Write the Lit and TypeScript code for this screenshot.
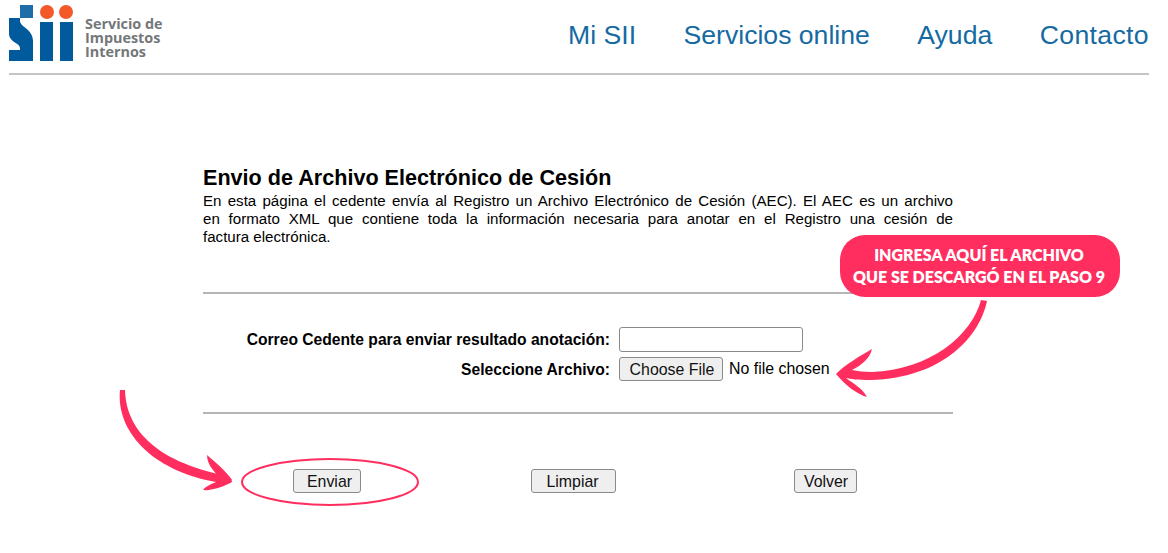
import { LitElement, html, css, svg } from "lit";
import { customElement } from "lit/decorators.js";

@customElement("app-root")
export class AppRoot extends LitElement {
  static styles = css`
    :host { display: block; position: relative; width: 1168px; height: 553px; overflow: hidden; background: #fff; font-family: "Liberation Sans", Arial, sans-serif; color: #000; }
    .header { display: flex; justify-content: space-between; align-items: flex-start; margin: 0 19px 0 9px; height: 73px; border-bottom: 2px solid #c4c4c4; }
    .brand { display: flex; gap: 12px; padding-top: 4px; }
    .brand svg { display: block; }
    .brand-text { font-family: "Open Sans", sans-serif; font-weight: 700; font-size: 14.4px; line-height: 14px; color: #74777a; padding-top: 13px; }
    .nav { display: flex; gap: 47.5px; padding-top: 20px; font-size: 26.6px; line-height: 30px; color: #156aa2; }
    .contact { letter-spacing: 0.35px; }
    .main { width: 750px; margin: 92px 0 0 203px; }
    h1 { margin: 0 0 3px; font-size: 21.6px; line-height: 22px; font-weight: bold; }
    p { margin: 0; font-size: 15.1px; line-height: 18px; height: 100px; }
    .line { display: block; white-space: nowrap; }
    .just { text-align: justify; text-align-last: justify; white-space: normal; }
    .rule { height: 0; border-top: 2px solid #b5b5b5; }
    .form { display: grid; grid-template-columns: 407px auto; column-gap: 9px; row-gap: 5px; padding: 33px 0 31px; align-items: center; justify-items: start; }
    .label { justify-self: end; font-size: 15.65px; font-weight: bold; white-space: nowrap; padding-top: 1px; }
    .field { width: 184px; height: 25px; box-sizing: border-box; border: 1px solid #8a8a8a; border-radius: 3px; background: #fff; }
    .file { display: flex; align-items: center; gap: 6px; font-size: 15.9px; white-space: nowrap; }
    .btn { box-sizing: border-box; height: 24px; padding: 1px 0 0; border: 1px solid #8a8a8a; border-radius: 3px; background: #efefef; font: 15.9px "Liberation Sans", Arial, sans-serif; color: #111; }
    .choose { width: 104px; padding-left: 2px; }
    .actions { display: flex; padding: 55px 0 0 90px; }
    .enviar { width: 68px; margin-right: 170px; padding-left: 5px; }
    .limpiar { width: 85px; margin-right: 178px; padding-right: 2px; }
    .volver { width: 63px; padding-left: 1px; }
    .overlay { position: absolute; left: 0; top: 0; pointer-events: none; }
    .callout { position: absolute; left: 840px; top: 235px; width: 280px; height: 62px; box-sizing: border-box; padding: 9px 2px 0 0; border-radius: 25px; background: #ff2e5f; color: #fff; text-align: center; font-family: "Lato", sans-serif; font-weight: 800; font-size: 16px; line-height: 22px; white-space: nowrap; }
  `;

  render() {
    return html`
      <header class="header">
        <div class="brand">
          <svg width="64" height="58" viewBox="9 4 64 58" aria-label="SII">
            <rect x="20" y="5" width="13" height="13" fill="#1f6da8"></rect>
            <path d="M9 18 H20 V21 C20 27 33 29 33 41 V61 H9 V50 H20 V48 C20 43 9 42 9 34 Z" fill="#005a9c"></path>
            <circle cx="47" cy="12" r="7" fill="#f4592a"></circle>
            <circle cx="66" cy="12" r="7" fill="#f4592a"></circle>
            <rect x="40" y="22" width="13" height="39" fill="#005a9c"></rect>
            <rect x="60" y="22" width="13" height="39" fill="#005a9c"></rect>
          </svg>
          <div class="brand-text">Servicio de<br />Impuestos<br />Internos</div>
        </div>
        <nav class="nav"><span>Mi SII</span><span>Servicios online</span><span>Ayuda</span><span class="contact">Contacto</span></nav>
      </header>
      <main class="main">
        <h1>Envio de Archivo Electrónico de Cesión</h1>
        <p>
          <span class="line just">En esta página el cedente envía al Registro un Archivo Electrónico de Cesión (AEC). El AEC es un archivo</span>
          <span class="line just">en formato XML que contiene toda la información necesaria para anotar en el Registro una cesión de</span>
          <span class="line">factura electrónica.</span>
        </p>
        <div class="rule"></div>
        <div class="form">
          <span class="label">Correo Cedente para enviar resultado anotación:</span>
          <input class="field" type="text" />
          <span class="label">Seleccione Archivo:</span>
          <span class="file"><button class="btn choose">Choose File</button>No file chosen</span>
        </div>
        <div class="rule"></div>
        <div class="actions">
          <button class="btn enviar">Enviar</button>
          <button class="btn limpiar">Limpiar</button>
          <button class="btn volver">Volver</button>
        </div>
      </main>
      <svg class="overlay" width="1168" height="553" viewBox="0 0 1168 553">
        ${svg`<ellipse cx="330" cy="482" rx="88" ry="23" fill="none" stroke="#ff2e5f" stroke-width="2"></ellipse>
        <path d="M981 300 L987 301 C980 335 945 378 870 380 C858 380 850 379 846 378 C854 384 862 388 867 397 C857 394 846 386 836 374 C846 364 860 356 872 349 C870 358 862 365 852 370 C858 371 864 372 872 372 C930 370 972 335 981 300 Z" fill="#ff2e5f"></path>
        <path d="M120 390 L125 390 C126 425 150 461 228 476 C230 477 232 480 232 482 C225 486 212 491 203 490 C206 486 212 484 216 482 C150 470 116 430 120 390 Z" fill="#ff2e5f"></path>
        <path d="M207 455 C214 461 225 470 232 480 L222 480 C216 473 207 466 207 455 Z" fill="#ff2e5f"></path>`}
      </svg>
      <div class="callout">INGRESA AQUÍ EL ARCHIVO<br />QUE SE DESCARGÓ EN EL PASO 9</div>
    `;
  }
}
